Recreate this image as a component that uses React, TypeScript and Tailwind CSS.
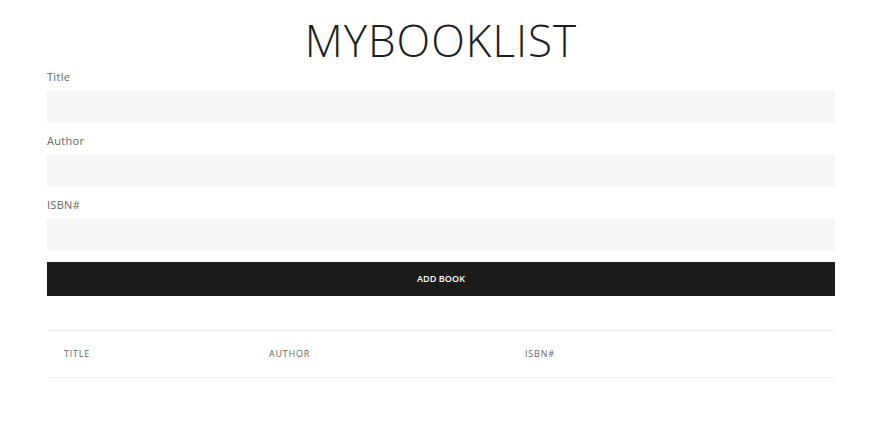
import React from 'react'

function Field({ label }: { label: string }) {
    return (
        <div className="flex flex-col">
            <label className="h-[14px] text-[11px] leading-[14px] tracking-[0.3px] text-[#666]">{label}</label>
            <input className="mt-[7px] h-[32px] w-full bg-[#f6f6f8] outline-none" />
        </div>
    )
}

function App() {
    return (
        <div className="min-h-[431px] bg-white font-['Open_Sans',sans-serif]">
            <div className="ml-[47px] w-[788px] pt-[16px]">
                <h1 className="text-center text-[44px] leading-[48px] font-light tracking-[1px] text-[#1e1e1e]">MYBOOKLIST</h1>

                <form className="mt-[6px] flex flex-col gap-[11px]" onSubmit={(e) => e.preventDefault()}>
                    <Field label="Title" />
                    <Field label="Author" />
                    <Field label="ISBN#" />
                    <button type="submit" className="h-[34px] w-full bg-[#1b1b1b] text-[9px] font-semibold tracking-[0.1px] text-white">
                        ADD BOOK
                    </button>
                </form>

                <div className="mt-[34px] grid h-[48px] grid-cols-[205px_256px_1fr] items-center border-y border-[#f0f0f0] text-[9px] tracking-[0.8px] text-[#666]">
                    <span className="pl-[17px]">TITLE</span>
                    <span className="pl-[17px]">AUTHOR</span>
                    <span className="pl-[17px]">ISBN#</span>
                </div>
            </div>
        </div>
    )
}

export default App
